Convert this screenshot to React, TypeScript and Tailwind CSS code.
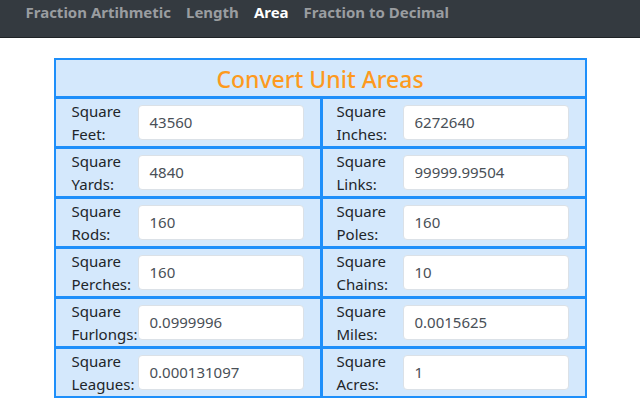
import React from "react";

const rows: [string, string, string, string][] = [
  ["Feet:", "43560", "Inches:", "6272640"],
  ["Yards:", "4840", "Links:", "99999.99504"],
  ["Rods:", "160", "Poles:", "160"],
  ["Perches:", "160", "Chains:", "10"],
  ["Furlongs:", "0.0999996", "Miles:", "0.0015625"],
  ["Leagues:", "0.000131097", "Acres:", "1"],
];

function Cell({ unit, value, left }: { unit: string; value: string; left: boolean }) {
  return (
    <div className={`h-[47px] bg-[#d4e8fc] flex items-center ${left ? "pl-[16px]" : "pl-[14px]"}`}>
      <div className="w-[66px] shrink-0 text-[15px] leading-[23px] text-[#212529]">
        Square
        <br />
        {unit}
      </div>
      <div className="w-[166px] h-[35px] bg-white rounded-[4px] border border-[#dbe1e7] flex items-center pl-[11px] text-[15px] text-[#495057]">
        {value}
      </div>
    </div>
  );
}

export default function App() {
  return (
    <div className="w-[640px] h-[400px] overflow-hidden bg-white" style={{ fontFamily: '"Noto Sans", "Open Sans", sans-serif' }}>
      <nav className="h-[38px] bg-[#343a40] border-b border-[#1f2326] flex items-start pl-[18px] pt-[1px]">
        {[
          ["Fraction Artihmetic", false],
          ["Length", false],
          ["Area", true],
          ["Fraction to Decimal", false],
        ].map(([t, active]) => (
          <span
            key={t as string}
            className={`px-[7.5px] text-[15px] leading-[22px] font-bold ${active ? "text-white" : "text-[#9a9da0]"}`}
          >
            {t}
          </span>
        ))}
      </nav>
      <div className="mt-[20px] mx-auto w-[533px] bg-[#1e8ffa] p-[2px]">
        <div className="h-[36px] bg-[#d4e8fc] flex items-center justify-center text-[23px] font-medium text-[#fd9a1e] leading-none pt-[3px]">
          Convert Unit Areas
        </div>
        <div className="mt-[3px] grid grid-cols-[264px_262px] gap-[3px]">
          {rows.map(([u1, v1, u2, v2]) => (
            <React.Fragment key={u1}>
              <Cell unit={u1} value={v1} left />
              <Cell unit={u2} value={v2} left={false} />
            </React.Fragment>
          ))}
        </div>
      </div>
    </div>
  );
}
